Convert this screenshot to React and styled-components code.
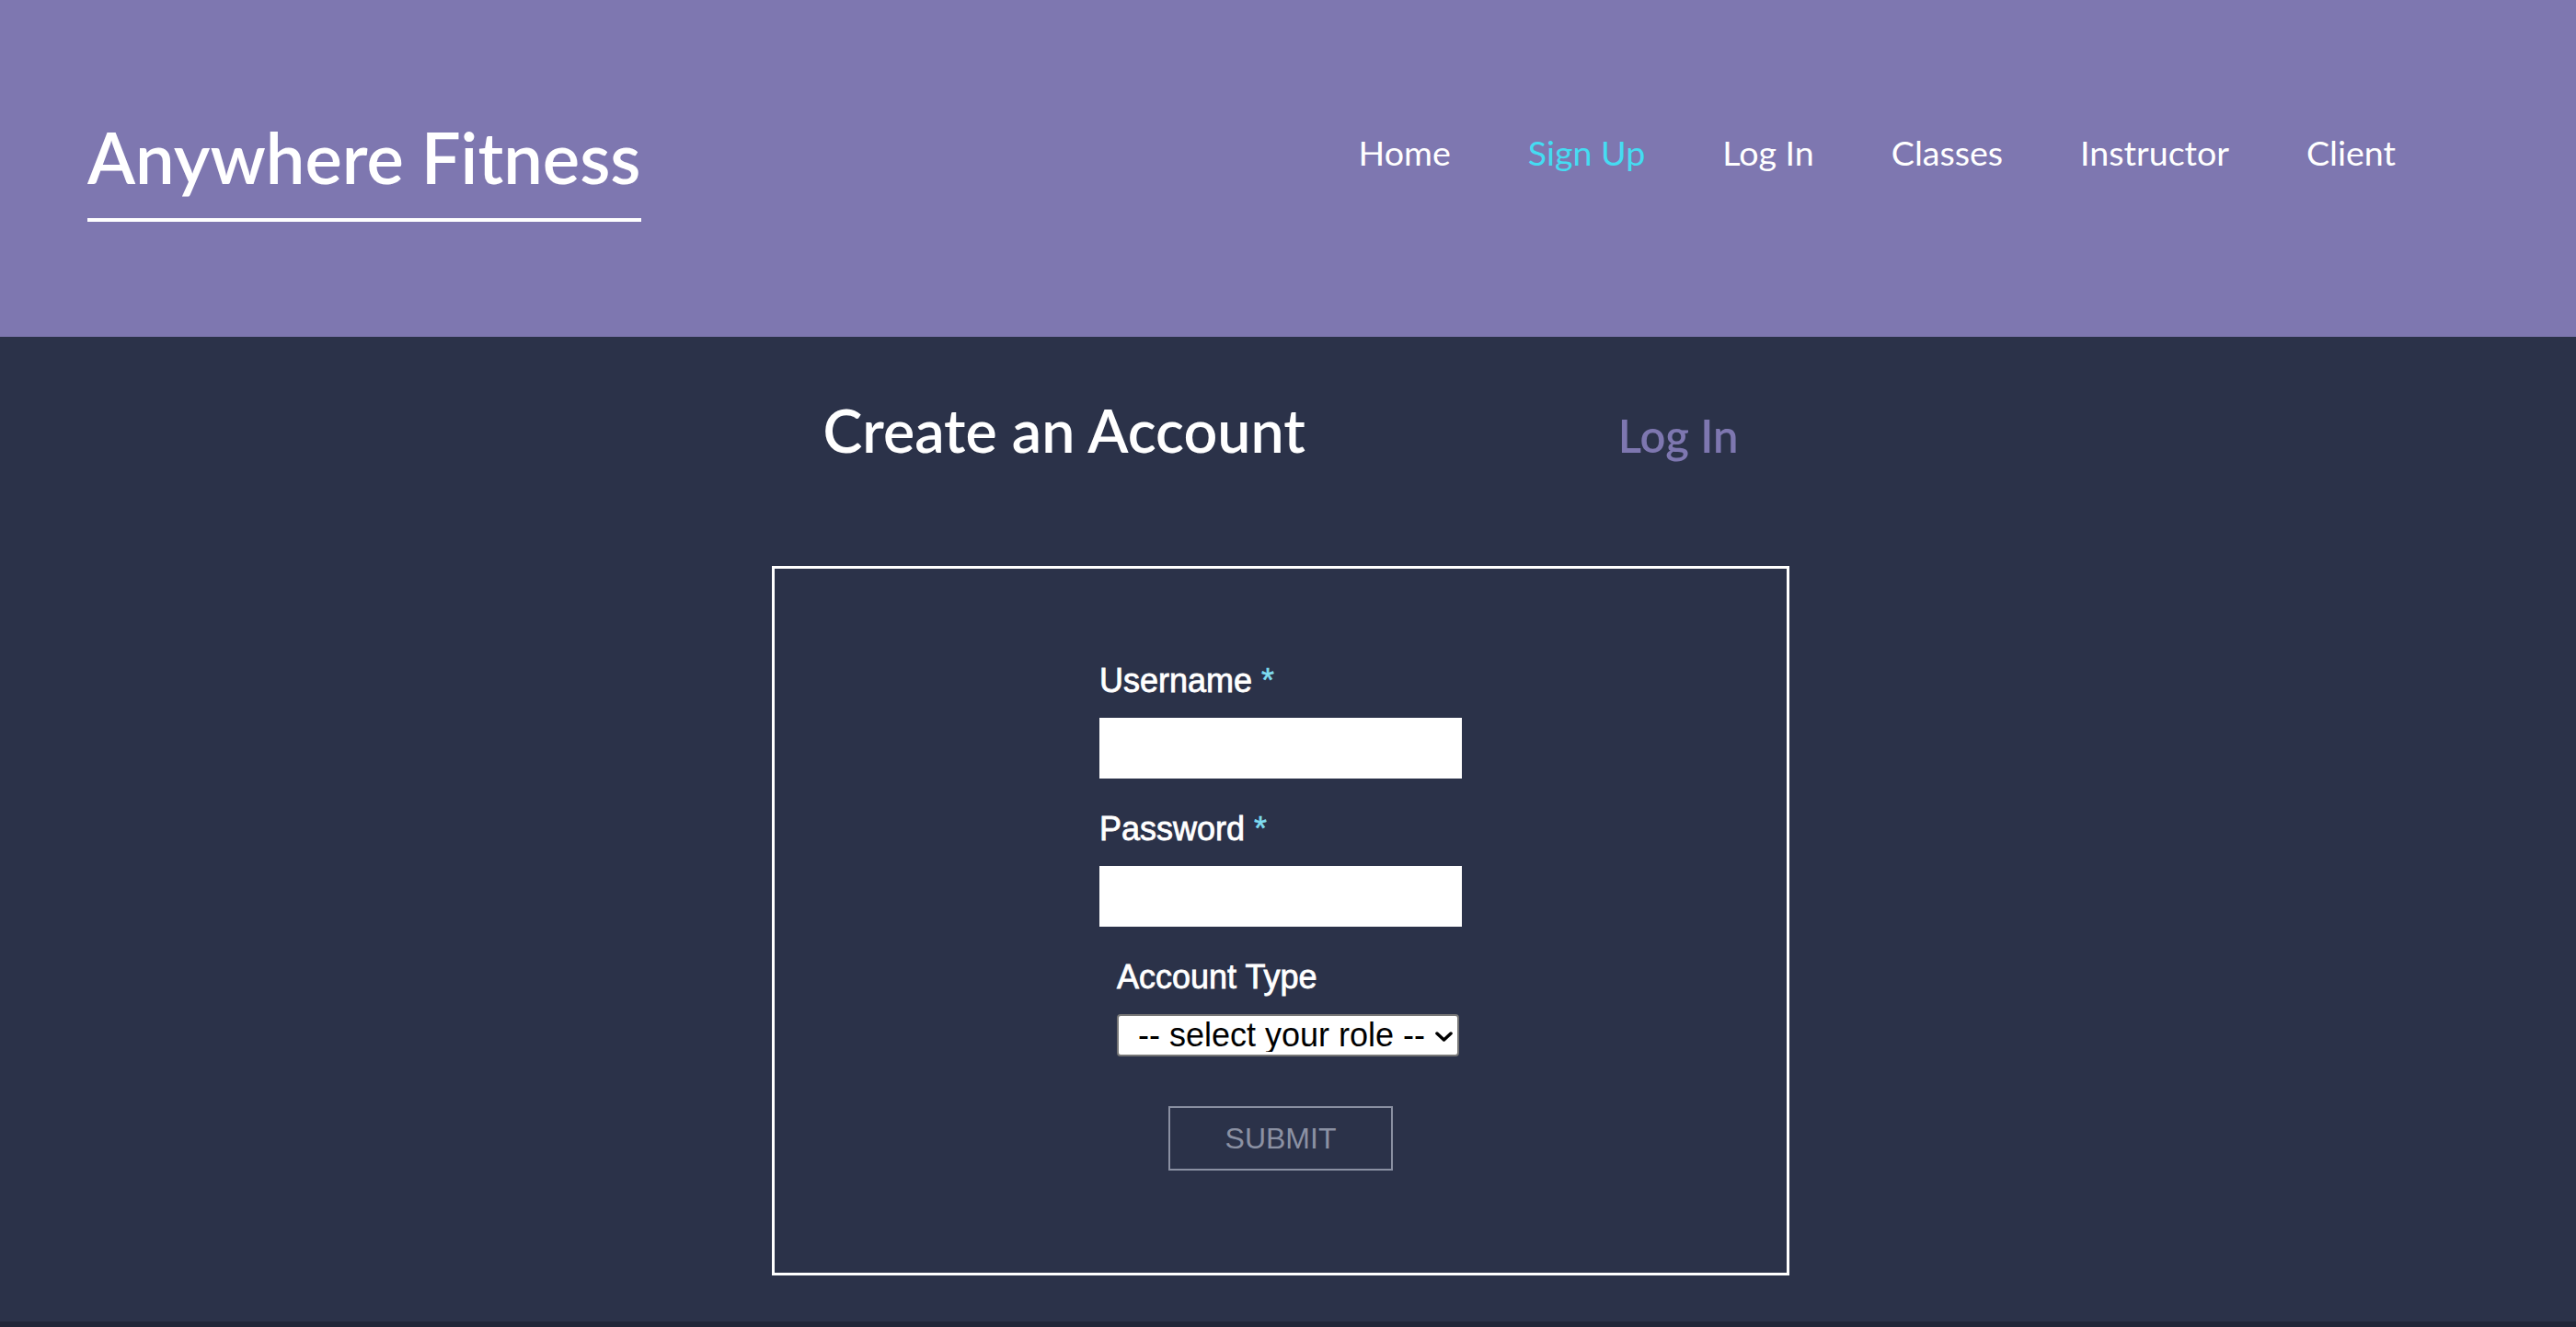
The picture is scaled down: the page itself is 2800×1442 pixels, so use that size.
import React, { useState } from "react";
import styled, { createGlobalStyle } from "styled-components";

const GlobalStyle = createGlobalStyle`
  html, body {
    margin: 0;
    padding: 0;
    background: #212638;
  }
  * {
    box-sizing: border-box;
  }
`;

const Page = styled.div`
  min-height: 1442px;
  display: flex;
  flex-direction: column;
  font-family: Lato, "Open Sans", sans-serif;
`;

const Header = styled.header`
  height: 366px;
  background: #7e77b0;
  display: flex;
  align-items: center;
  justify-content: space-between;
  padding: 0 196px 0 95px;
`;

const Logo = styled.h1`
  margin: 0;
  font-size: 76px;
  font-weight: 600;
  line-height: 1.2;
  color: #ffffff;
  padding-bottom: 21px;
  border-bottom: 4px solid #ffffff;
`;

const Nav = styled.nav`
  display: flex;
  gap: 84px;
  margin-bottom: 35px;
`;

const NavLink = styled.a`
  font-size: 37.6px;
  line-height: 1.2;
  color: ${(p) => (p.$active ? "#45dcf2" : "#ffffff")};
  text-decoration: none;
  cursor: pointer;
`;

const Main = styled.main`
  background: #2b3249;
  height: 1070px;
  display: flex;
  flex-direction: column;
  align-items: center;
  padding: 63px 16px 0 0;
`;

const TitleRow = styled.div`
  display: flex;
  align-items: baseline;
  gap: 340px;
  margin-bottom: 109px;
`;

const Title = styled.h2`
  margin: 0;
  font-size: 64.5px;
  font-weight: 600;
  line-height: 1.2;
  color: #ffffff;
`;

const SwitchLink = styled.a`
  font-size: 49px;
  font-weight: 600;
  line-height: 1.2;
  color: #7e77b0;
  cursor: pointer;
`;

const FormBox = styled.form`
  width: 1106px;
  height: 771px;
  border: 3px solid #ffffff;
  display: flex;
  flex-direction: column;
  align-items: center;
  padding-top: 101px;
  font-family: "Liberation Sans", Arial, sans-serif;
`;

const Column = styled.div`
  width: 394px;
  display: flex;
  flex-direction: column;
`;

const Label = styled.label`
  font-size: 36px;
  color: #ffffff;
  -webkit-text-stroke: 0.8px #ffffff;
  margin-bottom: 19px;
`;

const Star = styled.span`
  color: #7fdcf0;
  -webkit-text-stroke: 0.5px #7fdcf0;
`;

const TextInput = styled.input`
  width: 394px;
  height: 66px;
  border: none;
  outline: none;
  background: #ffffff;
  font-size: 28px;
  padding: 0 10px;
  margin-bottom: 34px;
`;

const RoleGroup = styled.div`
  display: flex;
  flex-direction: column;
  padding-left: 19px;
`;

const SelectWrap = styled.div`
  position: relative;
  width: 372px;
  height: 46px;
  margin-bottom: 54px;
`;

const RoleSelect = styled.select`
  appearance: none;
  -webkit-appearance: none;
  width: 100%;
  height: 100%;
  font-family: "Liberation Sans", Arial, sans-serif;
  font-size: 36px;
  line-height: 1;
  color: #000000;
  background: #ffffff;
  border: 2px solid #767676;
  border-radius: 4px;
  padding: 0 30px 0 21px;
`;

const Chevron = styled.svg`
  position: absolute;
  right: 7px;
  top: 19px;
  width: 19px;
  height: 11px;
  pointer-events: none;
`;

const Submit = styled.button`
  align-self: center;
  width: 244px;
  height: 70px;
  background: transparent;
  border: 2px solid #8a90a2;
  color: #8b91a3;
  font-family: "Liberation Sans", Arial, sans-serif;
  font-size: 32px;
  text-transform: uppercase;
  cursor: pointer;
`;

const Footer = styled.footer`
  flex: 1;
  background: #212638;
`;

const navItems = ["Home", "Sign Up", "Log In", "Classes", "Instructor", "Client"];

const App = () => {
  const [formState, setFormState] = useState({
    username: "",
    password: "",
    role: "",
  });

  const handleOnChange = ({ target }) => {
    setFormState({ ...formState, [target.name]: target.value });
  };

  return (
    <Page>
      <GlobalStyle />
      <Header>
        <Logo>Anywhere Fitness</Logo>
        <Nav>
          {navItems.map((item) => (
            <NavLink key={item} $active={item === "Sign Up"}>
              {item}
            </NavLink>
          ))}
        </Nav>
      </Header>
      <Main>
        <TitleRow>
          <Title>Create an Account</Title>
          <SwitchLink>Log In</SwitchLink>
        </TitleRow>
        <FormBox onSubmit={(e) => e.preventDefault()}>
          <Column>
            <Label htmlFor="username">
              Username <Star>*</Star>
            </Label>
            <TextInput
              id="username"
              name="username"
              type="text"
              value={formState.username}
              onChange={handleOnChange}
            />
            <Label htmlFor="password">
              Password <Star>*</Star>
            </Label>
            <TextInput
              id="password"
              name="password"
              type="password"
              value={formState.password}
              onChange={handleOnChange}
            />
            <RoleGroup>
              <Label htmlFor="role">Account Type</Label>
              <SelectWrap>
                <RoleSelect
                  id="role"
                  name="role"
                  value={formState.role}
                  onChange={handleOnChange}
                >
                  <option value="">-- select your role --</option>
                  <option value="instructor">Instructor</option>
                  <option value="client">Client</option>
                </RoleSelect>
                <Chevron viewBox="0 0 19 11">
                  <path
                    d="M2 2 L9.5 9 L17 2"
                    fill="none"
                    stroke="#000"
                    strokeWidth="3.5"
                    strokeLinecap="round"
                    strokeLinejoin="round"
                  />
                </Chevron>
              </SelectWrap>
            </RoleGroup>
            <Submit type="submit" disabled>
              Submit
            </Submit>
          </Column>
        </FormBox>
      </Main>
      <Footer />
    </Page>
  );
};

export default App;
